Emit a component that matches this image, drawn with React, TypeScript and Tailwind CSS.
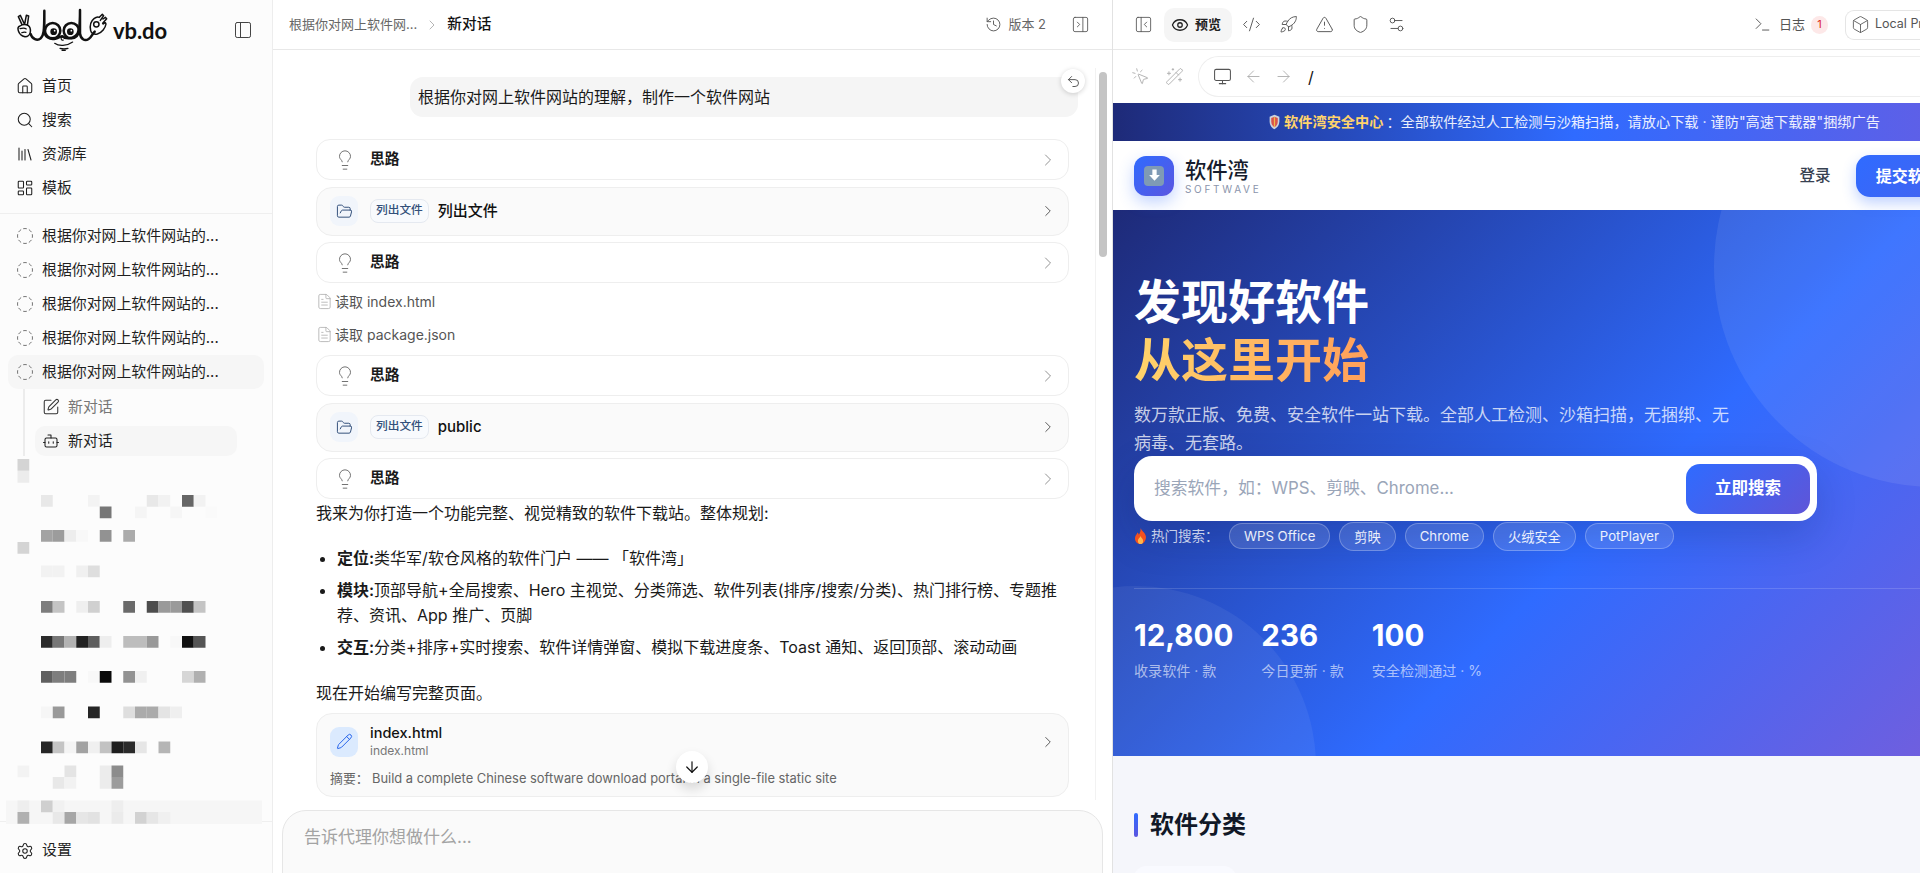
import {
  ArrowDown,
  ArrowLeft,
  ArrowRight,
  Bot,
  Box,
  ChevronRight,
  CircleDashed,
  CodeXml,
  Eye,
  FileText,
  FolderOpen,
  History,
  House,
  LayoutDashboard,
  Library,
  Lightbulb,
  Monitor,
  MousePointerClick,
  PanelLeft,
  PanelLeftClose,
  PanelRightClose,
  Pencil,
  Rocket,
  Search,
  Settings,
  Settings2,
  Shield,
  SquarePen,
  Terminal,
  TriangleAlert,
  Undo2,
  WandSparkles,
} from "lucide-react";

// blurred-out part of the history list: [column, top y, colour]
const mosaic: [number, number, string][] = [
  [-2, 463, "#d4d4d4"], [-2, 475, "#ececec"],
  [0, 499, "#e8e8e8"], [4, 499, "#f3f3f3"], [9, 499, "#e8e8e8"], [10, 499, "#f2f2f2"], [12, 499, "#666666"], [13, 499, "#f2f2f2"],
  [5, 510.5, "#777777"], [8, 510.5, "#f5f5f5"], [11, 510.5, "#f6f6f6"], [14, 510.5, "#fafafa"],
  [0, 534, "#a3a3a3"], [1, 534, "#9c9c9c"], [2, 534, "#ededed"], [3, 534, "#f8f8f8"], [5, 534, "#929292"], [7, 534, "#ababab"],
  [-2, 546, "#d4d4d4"],
  [0, 569.5, "#f2f2f2"], [1, 569.5, "#f2f2f2"], [3, 569.5, "#f0f0f0"], [4, 569.5, "#dedede"],
  [0, 605, "#7d7d7d"], [1, 605, "#c4c4c4"], [3, 605, "#efefef"], [4, 605, "#d0d0d0"], [7, 605, "#6a6a6a"], [9, 605, "#4d4d4d"], [10, 605, "#9a9a9a"], [11, 605, "#9a9a9a"], [12, 605, "#505050"], [13, 605, "#c4c4c4"],
  [0, 640, "#2b2b2b"], [1, 640, "#777777"], [2, 640, "#b2b2b2"], [3, 640, "#222222"], [4, 640, "#5e5e5e"], [5, 640, "#eeeeee"], [7, 640, "#bdbdbd"], [8, 640, "#bdbdbd"], [9, 640, "#999999"], [11, 640, "#f8f8f8"], [12, 640, "#111111"], [13, 640, "#555555"],
  [0, 675, "#606060"], [1, 675, "#7e7e7e"], [2, 675, "#7e7e7e"], [4, 675, "#f8f8f8"], [5, 675, "#0a0a0a"], [7, 675, "#929292"], [8, 675, "#f0f0f0"], [12, 675, "#d6d6d6"], [13, 675, "#b0b0b0"],
  [0, 710.5, "#f6f6f6"], [1, 710.5, "#999999"], [4, 710.5, "#252525"], [7, 710.5, "#dedede"], [8, 710.5, "#ababab"], [9, 710.5, "#ababab"], [10, 710.5, "#e4e4e4"], [11, 710.5, "#efefef"],
  [0, 745.5, "#262626"], [1, 745.5, "#c4c4c4"], [2, 745.5, "#f4f4f4"], [3, 745.5, "#a2a2a2"], [4, 745.5, "#f0f0f0"], [5, 745.5, "#c2c2c2"], [6, 745.5, "#1d1d1d"], [7, 745.5, "#2a2a2a"], [8, 745.5, "#e6e6e6"], [10, 745.5, "#b5b5b5"],
  [-2, 769.5, "#f3f3f3"], [2, 769.5, "#e4e4e4"], [5, 769.5, "#ececec"], [6, 769.5, "#8c8c8c"],
  [1, 781, "#e8e8e8"], [2, 781, "#f2f2f2"], [5, 781, "#ececec"], [6, 781, "#9c9c9c"],
  [-2, 804.5, "#eeeeee"], [0, 804.5, "#cfcfcf"], [1, 804.5, "#f1f1f1"], [6, 804.5, "#eeeeee"],
  [-2, 816, "#b0b0b0"], [1, 816, "#e8e8e8"], [2, 816, "#a6a6a6"], [3, 816, "#e6e6e6"], [4, 816, "#e2e2e2"], [6, 816, "#ebebeb"], [8, 816, "#d2d2d2"], [9, 816, "#e6e6e6"], [10, 816, "#f0f0f0"],
];

const Logo = () => (
  <svg viewBox="0 0 300 168" className="h-[56px] w-[100px] shrink-0" fill="none" stroke="#111" strokeLinecap="round" strokeLinejoin="round">
    {/* peace hand */}
    <path strokeWidth="4.5" d="M36 74 25 50l6-4 12 26M44 72l5-26 7 2-4 28M30 78c-6 2-7 8-5 14 3 10 10 16 20 18 8 0 15-6 16-14 1-8-1-16-7-20-7-3-18-2-24 2Z" />
    <path strokeWidth="3.5" d="M30 86c7-2 15-2 19 1M35 98c5-2 10-2 13-1" />
    {/* wave with b and d */}
    <path strokeWidth="7.5" d="M62 102c4 15 20 22 30 13 9-8 11-20 11-83v62c1 16 16 26 33 22 13-3 18-10 22-7 5 6 26 10 38-1 11-9 14-22 14-78v70c2 17 14 25 26 17 9-6 12-17 18-22" />
    <circle cx="128" cy="92" r="23" strokeWidth="7.5" />
    <circle cx="184" cy="92" r="23" strokeWidth="7.5" />
    <circle cx="131" cy="95" r="10" fill="#111" stroke="none" />
    <circle cx="181" cy="95" r="10" fill="#111" stroke="none" />
    <circle cx="134" cy="92" r="2.5" fill="#fff" stroke="none" />
    <circle cx="184" cy="92" r="2.5" fill="#fff" stroke="none" />
    {/* nose and smile */}
    <path strokeWidth="3.5" d="M160 112c-5-2-8 2-6 6 1 3 4 3 6 2M134 130c12 9 36 9 54-4M150 145c8 2 16 2 24 0M156 151h10" />
    {/* ok hand */}
    <path strokeWidth="4.5" d="M242 92c-3-14 0-28 10-36 6-5 12-6 16-4M268 52l9-9 4 4-10 14M279 57l7-5 4 4-12 14M279 72l7-4 2 4c-2 12-12 26-26 30-10 2-18-2-20-10" />
    <circle cx="259" cy="73" r="8" strokeWidth="4.5" />
  </svg>
);

const NavRow = ({ icon, label }: { icon: React.ReactNode; label: string }) => (
  <div className="flex h-[34px] items-center gap-[8px] px-[16px] text-[14.9px] text-[#1f1f1f]">
    {icon}
    <span>{label}</span>
  </div>
);

const Sidebar = () => (
  <aside className="flex h-full w-[272px] shrink-0 flex-col bg-[#fcfcfc]">
    <div className="flex h-[69px] items-start justify-between pl-[10px] pr-[19px]">
      <div className="flex items-center">
        <Logo />
        <span className="mt-[5px] ml-[3px] font-['Lato',sans-serif] text-[22px] font-bold leading-none tracking-[-0.1px] text-[#111]">vb.do</span>
      </div>
      <PanelLeft size={20} strokeWidth={1.2} className="mt-[20px] text-[#444]" />
    </div>
    <div className="border-b border-[#efefef] pb-[8px]">
      <NavRow icon={<House size={18} strokeWidth={1.4} />} label="首页" />
      <NavRow icon={<Search size={18} strokeWidth={1.4} />} label="搜索" />
      <NavRow icon={<Library size={18} strokeWidth={1.4} />} label="资源库" />
      <NavRow icon={<LayoutDashboard size={18} strokeWidth={1.4} />} label="模板" />
    </div>
    <div className="mt-[5px]">
      {[0, 1, 2, 3].map((i) => (
        <NavRow key={i} icon={<CircleDashed size={18} strokeWidth={1.2} className="text-[#666]" />} label="根据你对网上软件网站的..." />
      ))}
      <div className="mx-[8px] flex h-[34px] items-center gap-[8px] rounded-[10px] bg-[#f6f6f6] px-[8px] text-[14.9px] text-[#1f1f1f]">
        <CircleDashed size={18} strokeWidth={1.2} className="text-[#666]" />
        <span>根据你对网上软件网站的...</span>
      </div>
      <div className="ml-[23px] w-[214px] border-l-2 border-[#ececec] pt-[1px]">
        <div className="flex h-[34px] items-center gap-[8px] pl-[17px] text-[14.9px] text-[#777]">
          <SquarePen size={18} strokeWidth={1.4} className="text-[#333]" />
          <span>新对话</span>
        </div>
        <div className="ml-[10px] mt-[2px] flex h-[30px] items-center gap-[8px] rounded-[10px] bg-[#f6f6f6] pl-[7px] text-[14.9px] text-[#1f1f1f]">
          <Bot size={18} strokeWidth={1.4} />
          <span>新对话</span>
        </div>
      </div>
    </div>
    <svg width="272" height="367" viewBox="0 461 272 367" className="relative z-10 mt-[1px] -mb-[3px] shrink-0">
      <rect x="6" y="804.5" width="256" height="23.5" fill="#f6f6f6" />
      {mosaic.map(([c, y, fill], i) => (
        <rect key={i} x={41 + c * 11.75} y={y} width="11.75" height="11.75" fill={fill} />
      ))}
    </svg>
    <div className="flex flex-1 items-center border-t border-[#efefef] pt-[6px]">
      <NavRow icon={<Settings size={18} strokeWidth={1.4} />} label="设置" />
    </div>
  </aside>
);

const ThoughtCard = () => (
  <div className="flex h-[41px] items-center rounded-[14px] border border-[#eeeeee] bg-white pl-[17px] pr-[10px]">
    <Lightbulb size={22} strokeWidth={1} className="text-[#666]" />
    <span className="ml-[14px] flex-1 text-[14.7px] font-semibold text-[#1a1a1a]">思路</span>
    <ChevronRight size={20} strokeWidth={1.1} className="text-[#888]" />
  </div>
);

const ListCard = ({ title }: { title: string }) => (
  <div className="flex h-[49px] items-center rounded-[16px] border border-[#eeeeee] bg-[#fafafa] pl-[13px] pr-[10px]">
    <div className="flex h-[30px] w-[28px] items-center justify-center rounded-[9px] bg-[#f1f5fb]">
      <FolderOpen size={17} strokeWidth={1.4} className="text-[#33507a]" />
    </div>
    <span className="ml-[12px] rounded-[8px] border border-[#e5e9f0] bg-[#f8fafd] px-[5px] py-[2px] text-[11.7px] font-medium text-[#33507a]">列出文件</span>
    <span className="ml-[9px] flex-1 text-[15px] font-medium text-[#111]">{title}</span>
    <ChevronRight size={18} strokeWidth={1.3} className="mr-px text-[#555]" />
  </div>
);

const ReadRow = ({ name }: { name: string }) => (
  <div className="flex h-[33px] items-center gap-[2px] text-[14px] text-[#555]">
    <FileText size={17} strokeWidth={1.1} className="text-[#aaa]" />
    <span>读取 {name}</span>
  </div>
);

const Conversation = () => (
  <section className="flex h-full w-[840px] shrink-0 flex-col border-l border-[#ededed] bg-white">
    <header className="flex h-[50px] shrink-0 items-center border-b border-[#e8e8e8] pl-[16px] pr-[22px]">
      <span className="text-[13px] text-[#666]">根据你对网上软件网...</span>
      <ChevronRight size={16} strokeWidth={1.1} className="mx-[7px] text-[#999]" />
      <span className="flex-1 text-[14.7px] font-medium text-[#111]">新对话</span>
      <History size={17} strokeWidth={1.3} className="text-[#555]" />
      <span className="ml-[6px] text-[13px] text-[#666]">版本 2</span>
      <PanelRightClose size={19} strokeWidth={1.1} className="ml-[25px] text-[#555]" />
    </header>

    <div className="relative min-h-0 flex-1 overflow-hidden px-[43px] pt-[27px]">
      <div className="ml-auto -mr-[9px] flex h-[40px] w-[668px] items-center rounded-[13px] bg-[#f5f5f5] pl-[8px] text-[16px] text-[#1a1a1a]">
        根据你对网上软件网站的理解，制作一个软件网站
      </div>
      <div className="mt-[22px] flex flex-col gap-[6.5px]">
        <ThoughtCard />
        <ListCard title="列出文件" />
        <ThoughtCard />
      </div>
      <div className="mt-[2px]">
        <ReadRow name="index.html" />
        <ReadRow name="package.json" />
      </div>
      <div className="mt-[4px] flex flex-col gap-[6.5px]">
        <ThoughtCard />
        <ListCard title="public" />
        <ThoughtCard />
      </div>
      <p className="mt-[1px] text-[16px] leading-[26px] text-[#1a1a1a]">我来为你打造一个功能完整、视觉精致的软件下载站。整体规划:</p>
      <ul className="mt-[20px] flex list-disc flex-col gap-[7px] pl-[21px] text-[16px] leading-[25px] text-[#1a1a1a]">
        <li><strong className="font-semibold">定位:</strong>类华军/软仓风格的软件门户 —— 「软件湾」</li>
        <li><strong className="font-semibold">模块:</strong>顶部导航+全局搜索、Hero 主视觉、分类筛选、软件列表(排序/搜索/分类)、热门排行榜、专题推荐、资讯、App 推广、页脚</li>
        <li><strong className="font-semibold">交互:</strong>分类+排序+实时搜索、软件详情弹窗、模拟下载进度条、Toast 通知、返回顶部、滚动动画</li>
      </ul>
      <p className="mt-[20px] text-[16px] leading-[26px] text-[#1a1a1a]">现在开始编写完整页面。</p>
      <div className="mt-[7px] h-[84px] rounded-[16px] border border-[#eeeeee] bg-[#fafafa] pl-[13px] pr-[10px] pt-[9px]">
        <div className="flex items-center">
          <div className="flex h-[30px] w-[28px] items-center justify-center rounded-[9px] bg-[#dbeafe]">
            <Pencil size={17} strokeWidth={1.4} className="text-[#2563eb]" />
          </div>
          <div className="ml-[12px] flex-1">
            <div className="text-[14.5px] font-medium leading-[19px] text-[#111]">index.html</div>
            <div className="text-[12px] leading-[18px] text-[#777]">index.html</div>
          </div>
          <ChevronRight size={18} strokeWidth={1.3} className="mr-px text-[#555]" />
        </div>
        <div className="mt-[9px] flex text-[12.9px] text-[#666]">
          <span className="w-[42px]">摘要：</span>
          <span>Build a complete Chinese software download portal in a single-file static site</span>
        </div>
      </div>

      <div className="absolute right-[0px] top-[18px] bottom-0 w-[17px] border-l border-[#f2f2f2]">
        <div className="ml-[3px] mt-[4px] h-[185px] w-[8px] rounded-full bg-[#c4c4c4]" />
      </div>
      <div className="absolute left-[788px] top-[19px] flex h-[24px] w-[24px] items-center justify-center rounded-full bg-white shadow-[0_1px_5px_rgba(0,0,0,0.18)]">
        <Undo2 size={15} strokeWidth={1.4} className="text-[#444]" />
      </div>
      <div className="absolute left-[403px] top-[701px] flex h-[32px] w-[32px] items-center justify-center rounded-full bg-white shadow-[0_6px_12px_rgba(0,0,0,0.14)]">
        <ArrowDown size={18} strokeWidth={1.6} className="text-[#111]" />
      </div>
    </div>

    <div className="mt-[10px] h-[63px] shrink-0 overflow-hidden px-[9px]">
      <div className="h-[120px] rounded-[24px] border border-[#e6e6e6] bg-[#fafafa] pl-[21px] pt-[14px] text-[17px] text-[#a3a3a3]">
        告诉代理你想做什么...
      </div>
    </div>
  </section>
);

const ShieldEmoji = () => (
  <svg viewBox="0 0 16 20" className="h-[18px] w-[13px] shrink-0">
    <path d="M8 1 14 3.500v6c0 4.500-2.600 7.600-6 9.500-3.400-1.900-6-5-6-9.500v-6Z" fill="#cdd3dc" />
    <path d="M8 3.500 12 5v4.700c0 3-1.700 5.300-4 6.700-2.300-1.400-4-3.700-4-6.700V5Z" fill="#d9534a" />
    <path d="M8 4v12" stroke="#f2b84b" strokeWidth="1.500" />
  </svg>
);

const FlameEmoji = () => (
  <svg viewBox="0 0 14 18" className="h-[16px] w-[13px] shrink-0">
    <path d="M7 0c1 3 5 5 6 9 .8 4-2 9-6 9s-7-3.500-6-8c.5-2 2-3 2.500-5 1 .5 1.500 1.500 1.500 2.500C6.500 6 7.500 3 7 0Z" fill="#f4511e" />
    <path d="M7 9c.5 2 3 3 3 5.500S8.500 18 7 18s-3-1.200-3-3.500S6.500 11 7 9Z" fill="#ffb74d" />
  </svg>
);

const stats = [
  ["12,800", "收录软件 · 款"],
  ["236", "今日更新 · 款"],
  ["100", "安全检测通过 · %"],
];

const tags = ["WPS Office", "剪映", "Chrome", "火绒安全", "PotPlayer"];

const SoftwarePage = () => (
  <div className="w-[922px] shrink-0">
    <div className="flex h-[38px] items-center justify-center gap-[3px] bg-[linear-gradient(90deg,#1e2a78,#2f6bff,#6c5ce0)] text-[14.2px] text-white/90">
      <ShieldEmoji />
      <span className="font-semibold text-[#ffd36b]">软件湾安全中心</span>
      <span>：全部软件经过人工检测与沙箱扫描，请放心下载 · 谨防"高速下载器"捆绑广告</span>
    </div>
    <nav className="relative z-10 flex h-[69px] items-center bg-white pl-[21px]">
      <div className="flex h-[40px] w-[40px] items-center justify-center rounded-[12px] bg-[linear-gradient(135deg,#2f6bff,#5b55e0)] shadow-[0_6px_16px_rgba(47,107,255,0.3)]">
        <div className="flex h-[20px] w-[20px] items-center justify-center rounded-[4px] bg-[#7f9ab5]">
          <svg viewBox="0 0 14 14" className="h-[15px] w-[15px]">
            <path d="M5 1.500h4v5h3L7 12 2 6.500h3Z" fill="#fff" />
          </svg>
        </div>
      </div>
      <div className="ml-[11px]">
        <div className="text-[21.300px] font-medium leading-[26px] text-[#161c2d]">软件湾</div>
        <div className="text-[10px] leading-[12px] tracking-[0.27em] text-[#8a94ab]">SOFTWAVE</div>
      </div>
      <span className="ml-[538px] text-[15.6px] font-medium text-[#374151]">登录</span>
      <div className="ml-[25px] flex h-[42px] w-[160px] items-center rounded-[14px] bg-[linear-gradient(135deg,#2f6bff,#4f5fe8)] pl-[20px] text-[16px] font-semibold text-white shadow-[0_6px_14px_rgba(47,107,255,0.3)]">
        提交软件
      </div>
    </nav>
    <div className="relative h-[546px] overflow-hidden bg-[linear-gradient(135deg,#1e2a78_0%,#2f6bff_55%,#7c5cd8_100%)] px-[21px] pt-[63px]">
      <div className="absolute -right-[119px] -top-[163px] h-[440px] w-[440px] rounded-full bg-white/[0.08]" />
      <div className="absolute -bottom-[190px] -left-[157px] h-[360px] w-[360px] rounded-full bg-white/[0.06]" />
      <div className="relative">
        <h1 className="text-[47px] font-semibold leading-[58px] text-white">发现好软件</h1>
        <h1 className="w-fit bg-[linear-gradient(90deg,#ffd36b,#ff9f5a)] bg-clip-text text-[47px] font-semibold leading-[58px] text-transparent">从这里开始</h1>
        <p className="mt-[12px] w-[606px] text-[17px] leading-[28px] text-white/75">
          数万款正版、免费、安全软件一站下载。全部人工检测、沙箱扫描，无捆绑、无病毒、无套路。
        </p>
        <div className="-mt-px flex h-[65px] w-[683px] items-center rounded-[18px] bg-white pl-[20px] pr-[7px] shadow-[0_16px_40px_rgba(15,23,80,0.2)]">
          <span className="flex-1 pt-[1px] text-[16.8px] text-[#9aa5b8]">搜索软件，如：WPS、剪映、Chrome...</span>
          <div className="flex h-[50px] w-[124px] items-center justify-center rounded-[14px] bg-[linear-gradient(135deg,#2f6bff,#5f55d8)] text-[16.5px] font-semibold text-white">
            立即搜索
          </div>
        </div>
        <div className="flex h-[30px] items-center text-[13.500px] text-white/75">
          <FlameEmoji />
          <span className="ml-[4px] w-[78px]">热门搜索：</span>
          <div className="flex items-center gap-[9px]">
            {tags.map((t) => (
              <span key={t} className="rounded-full border border-white/25 bg-white/[0.12] px-[14px] py-[4px] text-[13.200px] leading-[normal] text-white/90">
                {t}
              </span>
            ))}
          </div>
        </div>
        <div className="mt-[37px] border-t border-white/15 pt-[29px]">
          <div className="flex gap-[28px]">
            {stats.map(([value, label]) => (
              <div key={label}>
                <div className="text-[29.500px] font-bold leading-[34px] text-white">{value}</div>
                <div className="mt-[10px] text-[14.100px] leading-[18px] text-white/60">{label}</div>
              </div>
            ))}
          </div>
        </div>
      </div>
    </div>
    <div className="bg-[#f5f6fb] px-[21px] pt-[54px]">
      <div className="flex h-[30px] items-center gap-[12px]">
        <div className="h-[24px] w-[4px] rounded-full bg-[linear-gradient(180deg,#2f6bff,#5b55e0)]" />
        <h2 className="text-[24px] font-bold text-[#111827]">软件分类</h2>
      </div>
      <div className="mt-[26px] h-[40px] w-[102px] rounded-t-[12px] bg-[#f9faff]" />
    </div>
  </div>
);

const Preview = () => (
  <section className="flex h-full min-w-0 flex-1 flex-col overflow-hidden border-l border-[#e2e2e2] bg-white">
    <header className="flex h-[50px] shrink-0 items-center border-b border-[#e8e8e8] text-[#555]">
      <PanelLeftClose size={19} strokeWidth={1.1} className="ml-[21px]" />
      <div className="ml-[11px] flex h-[34px] w-[68px] items-center gap-[6px] rounded-[10px] bg-[#f5f5f5] pl-[7px] text-[13px] font-semibold text-[#222]">
        <Eye size={18} strokeWidth={1.7} />
        <span>预览</span>
      </div>
      <CodeXml size={19} strokeWidth={1.2} className="ml-[10px]" />
      <Rocket size={19} strokeWidth={1.2} className="ml-[18px]" />
      <TriangleAlert size={19} strokeWidth={1.2} className="ml-[17px]" />
      <Shield size={19} strokeWidth={1.2} className="ml-[17px]" />
      <Settings2 size={19} strokeWidth={1.2} className="ml-[17px]" />
      <div className="ml-auto flex shrink-0 items-center">
        <Terminal size={19} strokeWidth={1.2} />
        <span className="ml-[7px] text-[13px] text-[#555]">日志</span>
        <span className="ml-[6px] flex h-[18px] w-[17px] items-center justify-center rounded-full bg-[#fde8e8] text-[11px] text-[#dc2626]">1</span>
        <div className="ml-[17px] flex h-[30px] w-[75px] items-center overflow-hidden rounded-l-[9px] border-y border-l border-[#e5e5e5] pl-[5px]">
          <Box size={19} strokeWidth={1.1} className="shrink-0" />
          <span className="ml-[5px] whitespace-nowrap text-[12.500px] text-[#555]">Local Preview</span>
        </div>
      </div>
    </header>
    <div className="flex h-[53px] shrink-0 items-center pl-[18px] text-[#aaa]">
      <MousePointerClick size={19} strokeWidth={1.1} />
      <WandSparkles size={19} strokeWidth={1.1} className="ml-[15px]" />
      <div className="ml-[14px] flex h-[41px] flex-1 items-center rounded-l-full border-y border-l border-[#eeeeee] pl-[14px]">
        <Monitor size={19} strokeWidth={1.3} className="text-[#555]" />
        <ArrowLeft size={19} strokeWidth={1.1} className="ml-[12px]" />
        <ArrowRight size={19} strokeWidth={1.1} className="ml-[11px]" />
        <span className="ml-[15px] text-[16px] text-[#111]">/</span>
      </div>
    </div>
    <SoftwarePage />
  </section>
);

export default function App() {
  return (
    <div className="flex h-screen w-screen overflow-hidden bg-white font-[Inter,'Noto_Sans_CJK_SC',sans-serif]">
      <Sidebar />
      <Conversation />
      <Preview />
    </div>
  );
}
